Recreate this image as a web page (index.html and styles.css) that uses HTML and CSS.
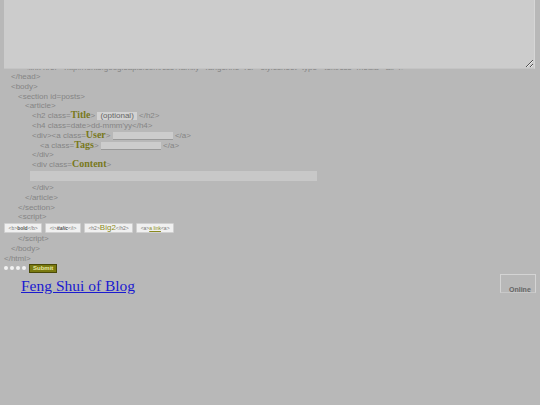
FILE: index.html
```html
<!DOCTYPE html>
<html lang="en">
<head>
  <meta charset="UTF-8" />
  <title>Feng Shui of Blog</title>
  <link rel="stylesheet" href="styles.css">
</head>
<body>

  <div class="page">
    <textarea class="head-src"></textarea>
    <div class="peek"><span>&lt;link href="http://fonts.googleapis.com/css?family=Tangerine" rel="stylesheet" type="text/css" media="all" /&gt;</span></div>

    <div class="code">
      <div class="ln i1">&lt;/head&gt;</div>
      <div class="ln i1">&lt;body&gt;</div>
      <div class="ln i2">&lt;section id=posts&gt;</div>
      <div class="ln i3">&lt;article&gt;</div>
      <div class="ln i4">&lt;h2 class=<b class="cls">Title</b>&gt; <span class="opt">(optional)</span> &lt;/h2&gt;</div>
      <div class="ln i4">&lt;h4 class=date&gt;dd-mmm'yy&lt;/h4&gt;</div>
      <div class="ln i4">&lt;div&gt;&lt;a class=<b class="cls">User</b>&gt; <input class="field user" type="text" /> &lt;/a&gt;</div>
      <div class="ln i5">&lt;a class=<b class="cls">Tags</b>&gt; <input class="field tags" type="text" /> &lt;/a&gt;</div>
      <div class="ln i4">&lt;/div&gt;</div>
      <div class="ln i4">&lt;div class=<b class="cls">Content</b>&gt;</div>
      <div class="content-box"></div>
      <div class="ln i4">&lt;/div&gt;</div>
      <div class="ln i3">&lt;/article&gt;</div>
      <div class="ln i2">&lt;/section&gt;</div>
      <div class="ln i2">&lt;script&gt;</div>
    </div>

    <div class="tools">
      <button class="tag">&lt;b&gt;<b>bold</b>&lt;/b&gt;</button>
      <button class="tag">&lt;i&gt;<b><i>italic</i></b>&lt;/i&gt;</button>
      <button class="tag">&lt;h2&gt;<span class="big">Big2</span>&lt;/h2&gt;</button>
      <button class="tag">&lt;a&gt;<u class="lnk">a link</u>&lt;a&gt;</button>
    </div>

    <div class="code">
      <div class="ln i2">&lt;/script&gt;</div>
      <div class="ln i1">&lt;/body&gt;</div>
      <div class="ln i0">&lt;/html&gt;</div>
    </div>

    <div class="send">
      <span class="dot"></span><span class="dot"></span><span class="dot"></span><span class="dot"></span>
      <button class="submit">Submit</button>
    </div>

    <div class="foot">
      <a class="brand" href="#">Feng Shui of Blog</a>
      <div class="online">Online</div>
    </div>
  </div>

</body>
</html>
```

FILE: styles.css
```css
* {
  box-sizing: border-box;
}

body {
  margin: 0;
  padding: 0;
  background: #b8b8b8;
  font-family: 'Liberation Sans', Arial, sans-serif;
  color: #858585;
}

.page {
  padding: 0 4px;
}

.head-src {
  display: block;
  width: 531px;
  height: 69px;
  margin: 0;
  background: #cccccc;
  border: none;
  border-right: 1px solid #d6d6d6;
  border-bottom: 1px solid #c4c4c4;
  resize: both;
}

.peek {
  height: 3px;
  overflow: hidden;
  padding-left: 20px;
  font-size: 8px;
  line-height: 8px;
}

.peek span {
  display: block;
  margin-top: -5px;
  white-space: nowrap;
}

.code {
  font-size: 8px;
}

.ln {
  height: 9.8px;
  line-height: 9.8px;
  white-space: nowrap;
}

.i0 { padding-left: 0; }
.i1 { padding-left: 7px; }
.i2 { padding-left: 14px; }
.i3 { padding-left: 21px; }
.i4 { padding-left: 28px; }
.i5 { padding-left: 36px; }

.cls {
  font-family: 'Liberation Serif', 'Times New Roman', serif;
  font-size: 10px;
  line-height: 8px;
  color: #78781c;
}

.opt {
  display: inline-block;
  background: #d2d2d2;
  color: #666;
  padding: 0 3px;
  line-height: 8px;
  vertical-align: top;
  margin-top: 1px;
}

.field {
  height: 8px;
  margin: 0;
  padding: 0;
  border: none;
  background: #cccccc;
  border-bottom: 1px solid #999;
  vertical-align: top;
  margin-top: 1px;
}

.user {
  width: 60px;
}

.tags {
  width: 60px;
}

.content-box {
  width: 287px;
  height: 10px;
  margin: 1px 0 2px 26px;
  background: #c8c8c8;
}

.tools {
  display: flex;
  gap: 3px;
  margin: 1px 0 1px;
}

.tag {
  height: 10px;
  padding: 0 3.5px;
  font-family: 'Liberation Sans', Arial, sans-serif;
  font-size: 5px;
  line-height: 8px;
  color: #777;
  background: #f0f0f0;
  border: 1px solid #d0d0d0;
  border-radius: 1px;
}

.tag b {
  color: #555;
}

.big {
  font-size: 8px;
  color: #8a8a20;
}

.lnk {
  color: #8a8a20;
}

.send {
  display: flex;
  align-items: center;
  gap: 2px;
  height: 9px;
}

.dot {
  width: 4px;
  height: 4px;
  border-radius: 50%;
  background: #f2f2f2;
}

.submit {
  margin-left: 1px;
  height: 9px;
  padding: 0 3px;
  font-family: 'Liberation Sans', Arial, sans-serif;
  font-size: 6px;
  font-weight: bold;
  line-height: 6px;
  color: #e8e8a0;
  background: #7a7a10;
  border: 1px solid #4a4a08;
}

.foot {
  display: flex;
  justify-content: space-between;
  align-items: flex-start;
  padding-left: 17px;
}

.brand {
  margin-top: 4px;
  font-family: 'Liberation Serif', 'Times New Roman', serif;
  font-size: 15.5px;
  color: #1a1ad0;
}

.online {
  width: 36px;
  height: 19px;
  margin-top: 1px;
  padding: 11px 0 0 8px;
  overflow: hidden;
  font-size: 7px;
  font-weight: bold;
  line-height: 8px;
  color: #666;
  border: 1px solid #d4d4d4;
  border-bottom-color: #c8c8c8;
}
```
